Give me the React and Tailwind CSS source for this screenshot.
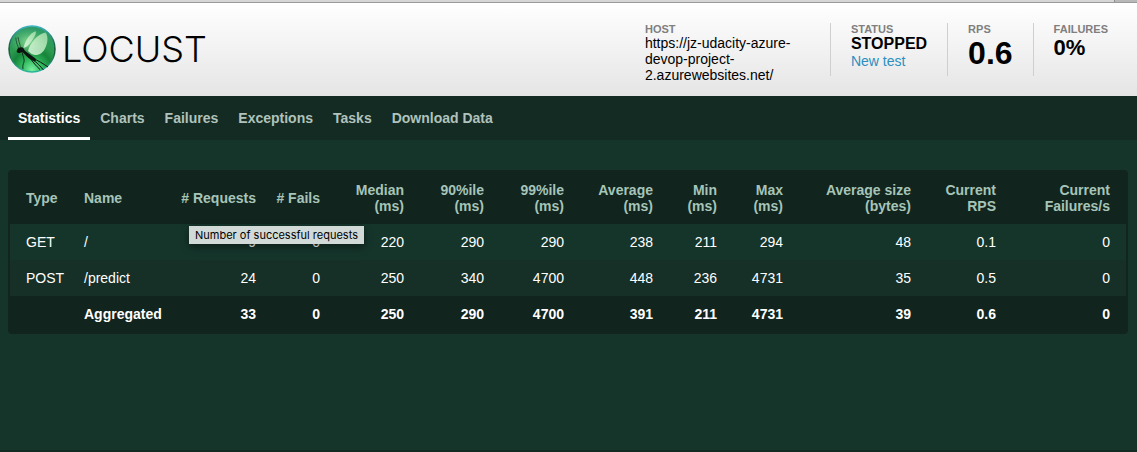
const tabs = ["Statistics", "Charts", "Failures", "Exceptions", "Tasks", "Download Data"];

const columns = [
  { label: ["Type"], width: "w-[64px]" },
  { label: ["Name"], width: "w-[97px]" },
  { label: ["# Requests"], width: "w-[95px]" },
  { label: ["# Fails"], width: "w-[64px]" },
  { label: ["Median", "(ms)"], width: "w-[84px]" },
  { label: ["90%ile", "(ms)"], width: "w-[80px]" },
  { label: ["99%ile", "(ms)"], width: "w-[80px]" },
  { label: ["Average", "(ms)"], width: "w-[89px]" },
  { label: ["Min", "(ms)"], width: "w-[64px]" },
  { label: ["Max", "(ms)"], width: "w-[66px]" },
  { label: ["Average size", "(bytes)"], width: "w-[128px]" },
  { label: ["Current", "RPS"], width: "w-[85px]" },
  { label: ["Current", "Failures/s"], width: "w-[120px]" },
];

const rows = [
  ["GET", "/", 9, 0, 220, 290, 290, 238, 211, 294, 48, 0.1, 0],
  ["POST", "/predict", 24, 0, 250, 340, 4700, 448, 236, 4731, 35, 0.5, 0],
];
const total = ["", "Aggregated", 33, 0, 250, 290, 4700, 391, 211, 4731, 39, 0.6, 0];

function cellClass(i) {
  if (i === 0) return "pl-4 text-left";
  if (i === 1) return "px-2.5 text-left";
  if (i === columns.length - 1) return "pr-4 text-right";
  return "pr-2.5 text-right";
}

function Logo() {
  return (
    <a href="#" className="flex items-center gap-1.5 pt-0.5 pl-2 text-black" aria-label="Locust">
      <svg viewBox="0 0 48 48" className="h-12 w-12" aria-hidden="true">
        <defs>
          <radialGradient id="ball" cx="0.5" cy="0.95" r="0.95">
            <stop offset="0" stopColor="#7df0a4" />
            <stop offset="0.22" stopColor="#35bd62" />
            <stop offset="0.45" stopColor="#16853a" />
            <stop offset="0.6" stopColor="#2b9a4e" />
            <stop offset="1" stopColor="#2f9b6c" />
          </radialGradient>
          <radialGradient id="glow" cx="0.5" cy="0.5" r="0.5">
            <stop offset="0" stopColor="#9be3a0" stopOpacity="0.85" />
            <stop offset="1" stopColor="#6cca86" stopOpacity="0" />
          </radialGradient>
          <linearGradient id="rim" x1="0" y1="0" x2="0" y2="1">
            <stop offset="0" stopColor="#3fb4c4" />
            <stop offset="0.5" stopColor="#12502e" />
            <stop offset="1" stopColor="#2bb59b" />
          </linearGradient>
          <linearGradient id="wing" x1="1" y1="0" x2="0.2" y2="1">
            <stop offset="0" stopColor="#b4e8b6" stopOpacity="0.75" />
            <stop offset="1" stopColor="#dcf8de" stopOpacity="0.85" />
          </linearGradient>
        </defs>
        <circle cx="24" cy="24" r="23" fill="url(#ball)" />
        <ellipse cx="20" cy="17" rx="18" ry="14" fill="url(#glow)" />
        <circle cx="24" cy="24" r="23" fill="none" stroke="url(#rim)" strokeWidth="1.4" />
        <path d="M15.5 23C17 16 22 8 27.500 6.300C29 8 26 13 23 17C20.500 20.500 18 22.500 15.500 23Z" fill="url(#wing)" />
        <path d="M20 26C22 18 29 9.500 37.500 7.500C41 12 39.500 20 35.500 26C32 30.500 27 31 23 28.500Z" fill="url(#wing)" />
        <path d="M9.200 24.500C10 22.600 12.500 21.800 15 22.800C16 23.500 16 25 17.500 26.200L27.500 33.500C28.500 34.500 28 36.300 26.500 36.200C22.500 35 19 32 15.500 28C13.500 26.800 12.500 28 10.500 28C8.500 27.800 8.300 26 9.200 24.500Z" fill="#0c140f" />
        <path d="M10.500 23C9.500 20 8 17 7.800 12.500M12.500 22.500C12 19 10.500 16 10 12" fill="none" stroke="#123020" strokeWidth="0.7" />
        <path d="M14.500 28C14.500 31 16.800 34 16 37C15 39.500 14.500 41 15 44" fill="none" stroke="#0c140f" strokeWidth="0.8" />
        <path d="M25 33.500C30 35.500 35 38.500 40 42M25 35C29 37.500 32 41 35.500 45M22 33C25 37 28 41 32 44.500" fill="none" stroke="#0c140f" strokeWidth="1" />
      </svg>
      <span className="font-['Inter'] text-[36px] leading-10 font-light">LOCUST</span>
    </a>
  );
}

function Label({ children }) {
  return <div className="text-[11px] leading-3 font-bold text-[#7f7f7f]">{children}</div>;
}

export default function App() {
  return (
    <div className="flex min-h-screen flex-col border-b-2 border-[#122b23] bg-[#15352b] font-['Liberation_Sans',sans-serif] text-sm leading-4 text-white">
      <div className="flex h-[3px] justify-end border-b border-[#9a9a9a] bg-[#d6d6d6]">
        <div className="w-[23px] border-l border-[#8f8f8f] bg-[#b8b8b8]" />
      </div>

      <header className="flex items-start justify-between bg-linear-to-b from-white to-[#e5e5e5] pt-5 pb-[13px] text-black">
        <Logo />
        <div className="flex items-start pr-[9px]">
          <div className="w-[185px] pr-5">
            <Label>HOST</Label>
            <div>https://jz-udacity-azure-devop-project-2.azurewebsites.net/</div>
          </div>
          <div className="flex divide-x divide-[#cfcfcf] border-l border-[#cfcfcf]">
            <div className="px-5 pb-[7px]">
              <Label>STATUS</Label>
              <div className="text-base leading-[18px] font-bold">STOPPED</div>
              <a href="#" className="block text-[#2b8fc0]">New test</a>
            </div>
            <div className="px-5">
              <Label>RPS</Label>
              <div className="text-[32px] leading-9 font-bold">0.6</div>
            </div>
            <div className="px-5">
              <Label>FAILURES</Label>
              <div className="text-[22px] leading-[26px] font-bold">0%</div>
            </div>
          </div>
        </div>
      </header>

      <nav className="flex bg-[#132b23] px-2">
        {tabs.map((tab, i) => (
          <a
            key={tab}
            href="#"
            className={
              "border-b-3 px-2.5 pt-3.5 pb-[11px] font-bold " +
              (i === 0 ? "border-white text-white" : "border-transparent text-[#b0c2bb]")
            }
          >
            {tab}
          </a>
        ))}
      </nav>

      <main className="relative mt-[30px] mr-[9px] ml-2 rounded bg-[#11241e] p-0.5">
        <table className="w-full table-fixed border-collapse">
          <thead className="text-[#a6c4b8]">
            <tr className="h-[52px]">
              {columns.map((c, i) => (
                <th key={i} scope="col" className={"pb-px whitespace-nowrap " + c.width + " " + cellClass(i)}>
                  {c.label.map((line) => (
                    <span key={line} className="block">{line}</span>
                  ))}
                </th>
              ))}
            </tr>
          </thead>
          <tbody>
            {rows.map((row, r) => (
              <tr key={r} className={r === 0 ? "bg-[#15352b]" : "bg-[#162f27]"}>
                {row.map((v, i) => (
                  <td key={i} className={"py-2.5 " + cellClass(i)}>{v}</td>
                ))}
              </tr>
            ))}
            <tr className="font-bold">
              {total.map((v, i) => (
                <td key={i} className={"py-2.5 " + cellClass(i)}>{v}</td>
              ))}
            </tr>
          </tbody>
        </table>
        <div
          role="tooltip"
          className="absolute top-14 left-[181px] bg-[#d2dad7] px-1.5 font-['Inter'] text-[11px] leading-[18px] whitespace-nowrap text-black shadow-[0_3px_8px_rgba(0,0,0,0.45)]"
        >
          Number of successful requests
        </div>
      </main>
    </div>
  );
}
